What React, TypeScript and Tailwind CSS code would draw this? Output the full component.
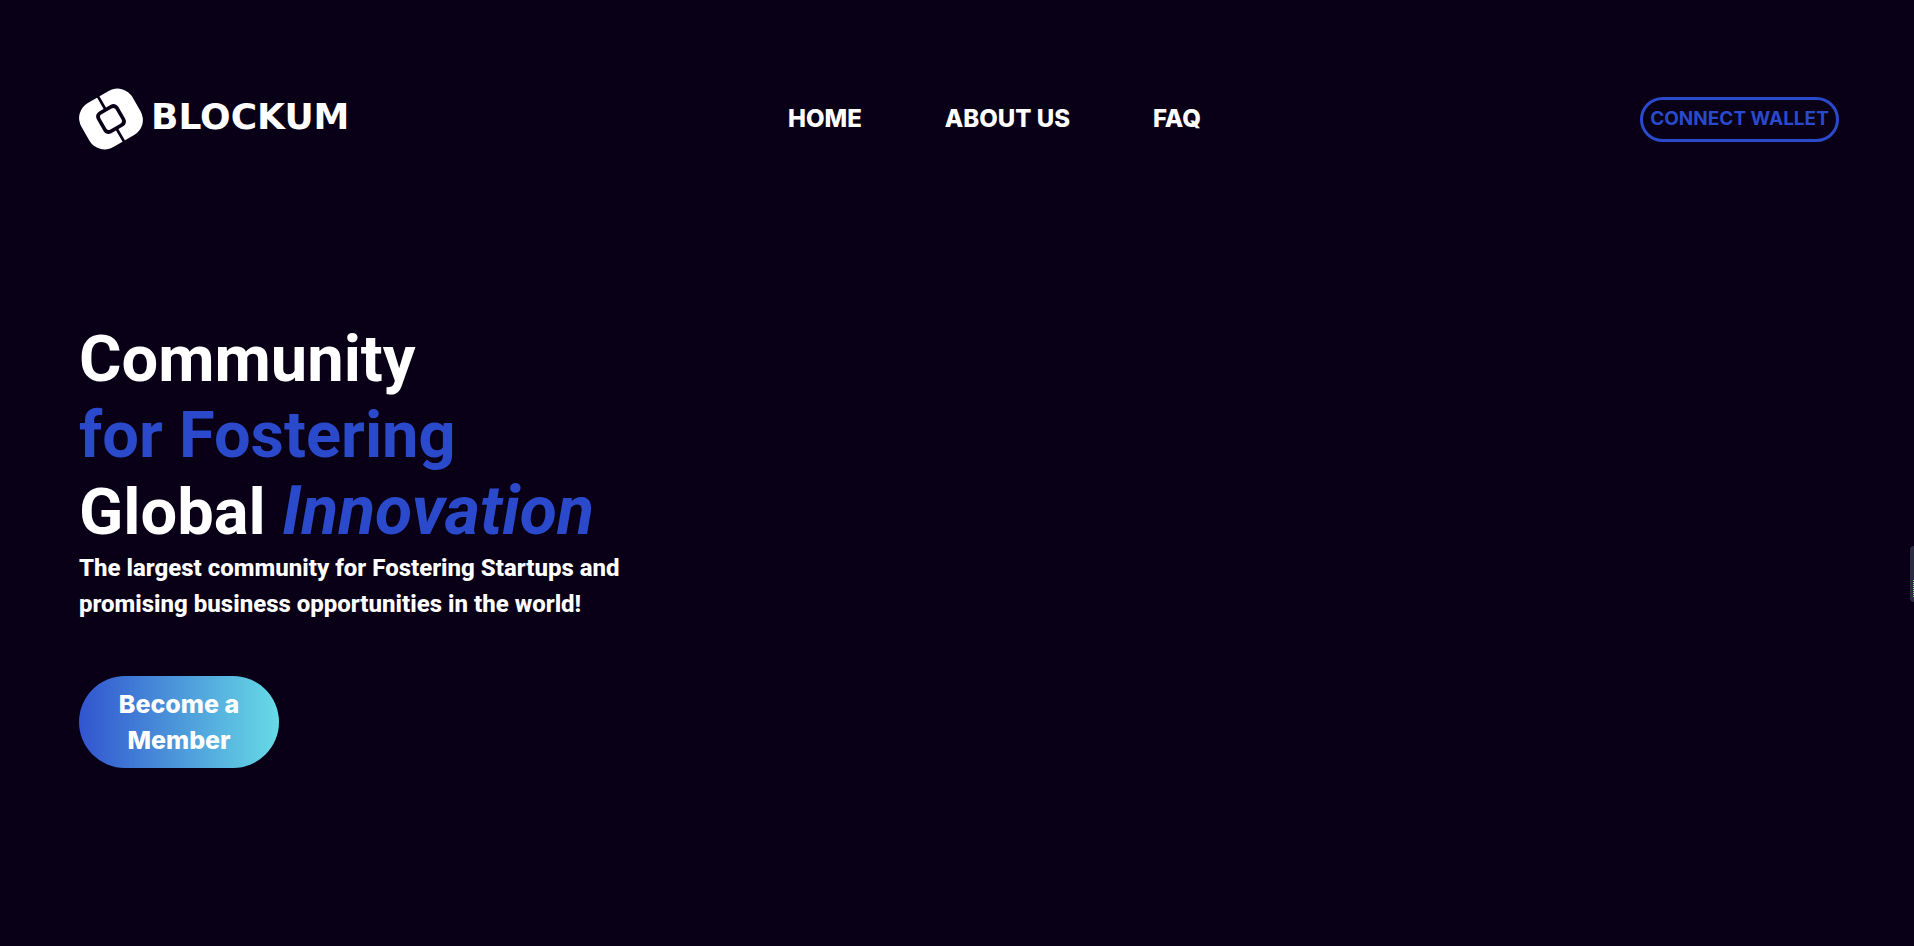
const navLinks = [
  { label: 'HOME', href: '#home' },
  { label: 'ABOUT US', href: '#about' },
  { label: 'FAQ', href: '#faq' },
];

function LogoMark() {
  return (
    <svg viewBox="0 0 64 62" className="h-[62px] w-16 shrink-0" aria-hidden="true">
      <g transform="translate(32 31) rotate(-30)">
        <rect x="-29.5" y="-25.5" width="59" height="51" rx="17.5" fill="#fff" />
        <path d="M0 -27V27" stroke="#090017" strokeWidth="2.8" />
        <rect x="-12.4" y="-12.4" width="24.8" height="24.8" rx="5.5" fill="#090017" />
        <rect x="-8.8" y="-8.8" width="17.6" height="17.6" rx="3" fill="#fff" />
      </g>
    </svg>
  );
}

function Header() {
  return (
    <header className="grid grid-cols-[1fr_auto_1fr] items-center pt-[88px]">
      <a href="#home" className="flex items-center gap-2 font-['DejaVu_Sans',sans-serif] text-4xl leading-none font-bold">
        <LogoMark />
        <span className="pb-1">BLOCKUM</span>
      </a>
      <nav className="flex gap-[83px] pl-[71px] text-2xl leading-9 font-extrabold">
        {navLinks.map((link) => (
          <a key={link.label} href={link.href}>
            {link.label}
          </a>
        ))}
      </nav>
      <button
        type="button"
        className="flex h-[45px] w-[199px] items-center justify-center justify-self-end rounded-full border-[3px] border-[#2a4acb] text-[19px] font-bold whitespace-nowrap text-[#2a4acb]"
      >
        CONNECT WALLET
      </button>
    </header>
  );
}

function Hero() {
  return (
    <main className="flex flex-col items-start pt-[171px] font-[Roboto,sans-serif] font-bold">
      <h1 className="text-[65px] leading-[76px]">
        Community
        <br />
        <span className="text-[#2a4acb]">for Fostering</span>
        <br />
        Global <em className="text-[68px] text-[#2a4acb]">Innovation</em>
      </h1>
      <p className="w-[600px] text-2xl leading-9 font-extrabold">
        The largest community for Fostering Startups and
        <br />
        promising business opportunities in the world!
      </p>
      <button
        type="button"
        className="mt-[54px] w-[200px] rounded-full bg-linear-to-r/srgb from-[#3155cf] to-[#67dbe6] px-6 py-[10px] font-[Inter,sans-serif] text-[25px] leading-9 font-extrabold"
      >
        Become a Member
      </button>
    </main>
  );
}

function EdgeHandle() {
  return (
    <div className="fixed top-[546px] right-0 flex h-14 w-1 items-end justify-end rounded-l-sm bg-[#2b2c42] pb-1" aria-hidden="true">
      <div className="h-[18px] w-px bg-[repeating-linear-gradient(#8fd08a_0_1px,#2b2c42_1px_2px)]" />
    </div>
  );
}

export default function App() {
  return (
    <div className="min-h-screen bg-[#090017] pr-[75px] pl-[79px] font-[Inter,sans-serif] text-white">
      <Header />
      <Hero />
      <EdgeHandle />
    </div>
  );
}
